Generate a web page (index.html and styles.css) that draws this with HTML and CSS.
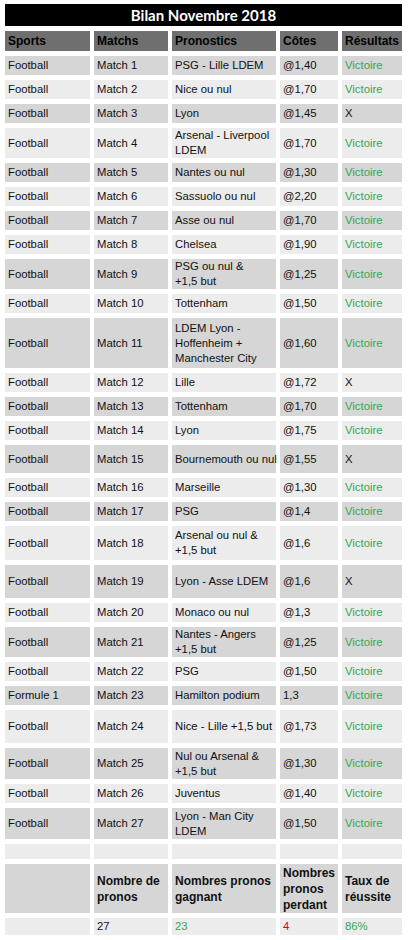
FILE: index.html
```html
<!DOCTYPE html>
<html lang="fr">
<head>
<meta charset="utf-8">
<title>Bilan Novembre 2018</title>
<link rel="stylesheet" href="styles.css">
</head>
<body>
<div class="sheet">
  <div class="title">Bilan Novembre 2018</div>
  <table class="grid">
    <colgroup>
      <col class="c-sport"><col class="c-match"><col class="c-prono"><col class="c-cote"><col class="c-res">
    </colgroup>
    <thead>
      <tr class="head h20"><th>Sports</th><th>Matchs</th><th>Pronostics</th><th>Côtes</th><th>Résultats</th></tr>
    </thead>
    <tbody>
      <tr class="dark h19"><td>Football</td><td>Match 1</td><td>PSG - Lille LDEM</td><td>@1,40</td><td class="win">Victoire</td></tr>
      <tr class="light h19"><td>Football</td><td>Match 2</td><td>Nice ou nul</td><td>@1,70</td><td class="win">Victoire</td></tr>
      <tr class="dark h19"><td>Football</td><td>Match 3</td><td>Lyon</td><td>@1,45</td><td>X</td></tr>
      <tr class="light h30"><td>Football</td><td>Match 4</td><td>Arsenal - Liverpool<br>LDEM</td><td>@1,70</td><td class="win">Victoire</td></tr>
      <tr class="dark h19"><td>Football</td><td>Match 5</td><td>Nantes ou nul</td><td>@1,30</td><td class="win">Victoire</td></tr>
      <tr class="light h19"><td>Football</td><td>Match 6</td><td>Sassuolo ou nul</td><td>@2,20</td><td class="win">Victoire</td></tr>
      <tr class="dark h19"><td>Football</td><td>Match 7</td><td>Asse ou nul</td><td>@1,70</td><td class="win">Victoire</td></tr>
      <tr class="light h19"><td>Football</td><td>Match 8</td><td>Chelsea</td><td>@1,90</td><td class="win">Victoire</td></tr>
      <tr class="dark h30"><td>Football</td><td>Match 9</td><td>PSG ou nul &amp;<br>+1,5 but</td><td>@1,25</td><td class="win">Victoire</td></tr>
      <tr class="light h19"><td>Football</td><td>Match 10</td><td>Tottenham</td><td>@1,50</td><td class="win">Victoire</td></tr>
      <tr class="dark h50"><td>Football</td><td>Match 11</td><td>LDEM Lyon -<br>Hoffenheim +<br>Manchester City</td><td>@1,60</td><td class="win">Victoire</td></tr>
      <tr class="light h19"><td>Football</td><td>Match 12</td><td>Lille</td><td>@1,72</td><td>X</td></tr>
      <tr class="dark h19"><td>Football</td><td>Match 13</td><td>Tottenham</td><td>@1,70</td><td class="win">Victoire</td></tr>
      <tr class="light h19"><td>Football</td><td>Match 14</td><td>Lyon</td><td>@1,75</td><td class="win">Victoire</td></tr>
      <tr class="dark h28"><td>Football</td><td>Match 15</td><td>Bournemouth ou nul</td><td>@1,55</td><td>X</td></tr>
      <tr class="light h19"><td>Football</td><td>Match 16</td><td>Marseille</td><td>@1,30</td><td class="win">Victoire</td></tr>
      <tr class="dark h19"><td>Football</td><td>Match 17</td><td>PSG</td><td>@1,4</td><td class="win">Victoire</td></tr>
      <tr class="light h34"><td>Football</td><td>Match 18</td><td>Arsenal ou nul &amp;<br>+1,5 but</td><td>@1,6</td><td class="win">Victoire</td></tr>
      <tr class="dark h33"><td>Football</td><td>Match 19</td><td>Lyon - Asse LDEM</td><td>@1,6</td><td>X</td></tr>
      <tr class="light h19"><td>Football</td><td>Match 20</td><td>Monaco ou nul</td><td>@1,3</td><td class="win">Victoire</td></tr>
      <tr class="dark h30"><td>Football</td><td>Match 21</td><td>Nantes - Angers<br>+1,5 but</td><td>@1,25</td><td class="win">Victoire</td></tr>
      <tr class="light h19"><td>Football</td><td>Match 22</td><td>PSG</td><td>@1,50</td><td class="win">Victoire</td></tr>
      <tr class="dark h19"><td>Formule 1</td><td>Match 23</td><td>Hamilton podium</td><td>1,3</td><td class="win">Victoire</td></tr>
      <tr class="light h33"><td>Football</td><td>Match 24</td><td>Nice - Lille +1,5 but</td><td>@1,73</td><td class="win">Victoire</td></tr>
      <tr class="dark h31"><td>Football</td><td>Match 25</td><td>Nul ou Arsenal &amp;<br>+1,5 but</td><td>@1,30</td><td class="win">Victoire</td></tr>
      <tr class="light h19"><td>Football</td><td>Match 26</td><td>Juventus</td><td>@1,40</td><td class="win">Victoire</td></tr>
      <tr class="dark h31"><td>Football</td><td>Match 27</td><td>Lyon - Man City<br>LDEM</td><td>@1,50</td><td class="win">Victoire</td></tr>
      <tr class="light h15"><td></td><td></td><td></td><td></td><td></td></tr>
      <tr class="dark h49 summary"><td></td><td>Nombre de<br>pronos</td><td>Nombres pronos<br>gagnant</td><td>Nombres<br>pronos<br>perdant</td><td>Taux de<br>réussite</td></tr>
      <tr class="light h17"><td></td><td>27</td><td class="win">23</td><td class="loss">4</td><td class="win">86%</td></tr>
    </tbody>
  </table>
</div>
</body>
</html>
```

FILE: styles.css
```css
html, body {
  margin: 0;
  padding: 0;
  background: #ffffff;
}

body {
  font-family: "Liberation Sans", Arial, Helvetica, sans-serif;
  color: #111111;
}

.sheet {
  padding-top: 4px;
}

.title {
  margin-left: 5px;
  width: 397px;
  height: 22px;
  background: #000000;
  color: #ffffff;
  font-family: Lato, "Open Sans", sans-serif;
  font-weight: 700;
  font-size: 15px;
  line-height: 22px;
  text-align: center;
}

.grid {
  margin-top: 0;
  margin-left: 1px;
  border-collapse: separate;
  border-spacing: 4px 5px;
  table-layout: fixed;
  width: 405px;
}

.c-sport { width: 85px; }
.c-match { width: 74px; }
.c-prono { width: 104px; }
.c-cote { width: 58px; }
.c-res { width: 60px; }

.grid th,
.grid td {
  padding: 0 0 0 3px;
  text-align: left;
  vertical-align: middle;
  white-space: nowrap;
  overflow: visible;
  font-size: 11.3px;
  line-height: 15px;
  font-weight: 400;
}

.grid .head th {
  background: #6f6f6f;
  color: #000000;
  font-weight: 700;
  font-size: 12px;
}

.dark td { background: #d6d6d6; }
.light td { background: #ececec; }

.summary td {
  font-weight: 700;
  font-size: 12px;
  line-height: 16px;
}

.win { color: #35a852; }
.loss { color: #e3001b; }

.h15 { height: 15px; }
.h17 { height: 17px; }
.h19 { height: 19px; }
.h20 { height: 20px; }
.h28 { height: 28px; }
.h30 { height: 30px; }
.h31 { height: 31px; }
.h33 { height: 33px; }
.h34 { height: 34px; }
.h49 { height: 49px; }
.h50 { height: 50px; }
```
